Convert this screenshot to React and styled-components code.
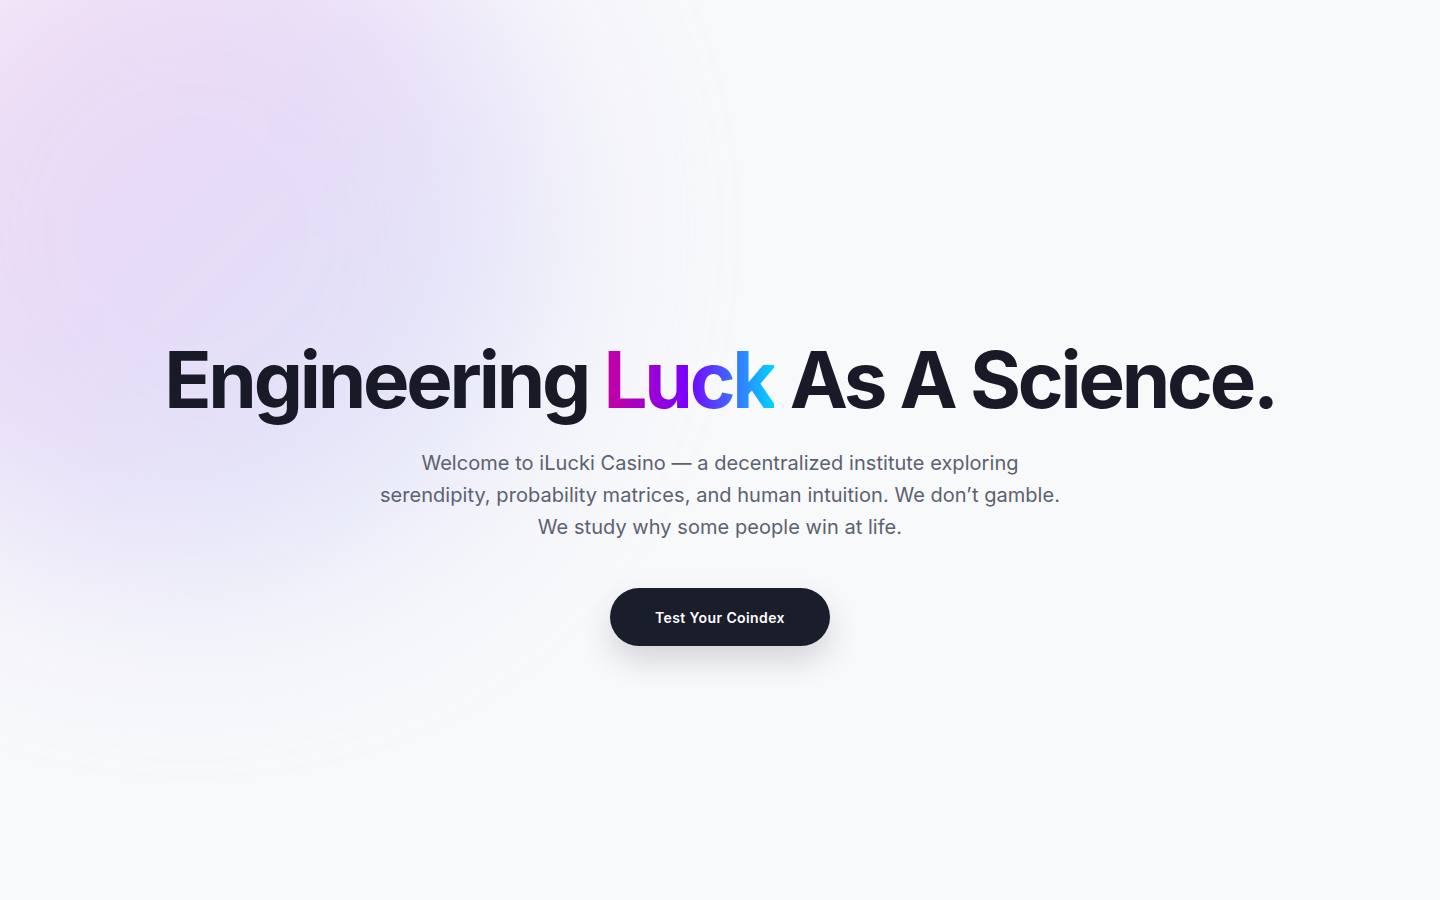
import React from 'react';
import styled, { createGlobalStyle } from 'styled-components';

const GlobalStyle = createGlobalStyle`
  * { box-sizing: border-box; }
  html, body {
    margin: 0;
    padding: 0;
    background: #f8f9fb;
    font-family: 'Inter', 'Liberation Sans', sans-serif;
  }
`;

export default function App() {
  return (
    <>
      <GlobalStyle />
      <Hero>
        <Glow />
        <Content>
          <Title>
            Engineering <GradientWord>Luck</GradientWord> As A Science.
          </Title>
          <Lead>
            Welcome to iLucki Casino — a decentralized institute exploring
            <br />
            serendipity, probability matrices, and human intuition. We don’t gamble.
            <br />
            We study why some people win at life.
          </Lead>
          <CtaButton type="button">Test Your Coindex</CtaButton>
        </Content>
      </Hero>
    </>
  );
}

const Hero = styled.section`
  position: relative;
  width: 100%;
  height: 100vh;
  overflow: hidden;
  display: flex;
  align-items: center;
  justify-content: center;
  padding-top: 82px;
  background: #f8f9fb;
`;

// soft lavender blob in the top-left corner
const Glow = styled.div`
  position: absolute;
  top: -130px;
  left: -170px;
  width: 720px;
  height: 720px;
  border-radius: 50%;
  background: linear-gradient(135deg, #f3c4ea 0%, #d6b9f4 45%, #c9cdf6 80%);
  opacity: 0.48;
  filter: blur(95px);
  pointer-events: none;
`;

const Content = styled.div`
  position: relative;
  display: flex;
  flex-direction: column;
  align-items: center;
  text-align: center;
`;

const Title = styled.h1`
  margin: 0 0 23px;
  font-size: 78px;
  line-height: 88px;
  font-weight: 700;
  letter-spacing: -3.2px;
  color: #181b27;
  white-space: nowrap;
`;

const GradientWord = styled.span`
  background: linear-gradient(90deg, #c8009e 0%, #7a00ff 50%, #00d4ff 100%);
  -webkit-background-clip: text;
  background-clip: text;
  color: transparent;
`;

const Lead = styled.p`
  margin: 0 0 45px;
  font-size: 20px;
  line-height: 32px;
  letter-spacing: 0.05px;
  color: #5b6170;
  font-weight: 400;
`;

const CtaButton = styled.button`
  width: 220px;
  height: 58px;
  border: none;
  border-radius: 999px;
  background: #1a1e2b;
  color: #ffffff;
  font-family: 'Inter', 'Liberation Sans', sans-serif;
  font-size: 14px;
  font-weight: 600;
  letter-spacing: 0.4px;
  cursor: pointer;
  box-shadow: 0 14px 30px rgba(20, 24, 40, 0.16);
`;
